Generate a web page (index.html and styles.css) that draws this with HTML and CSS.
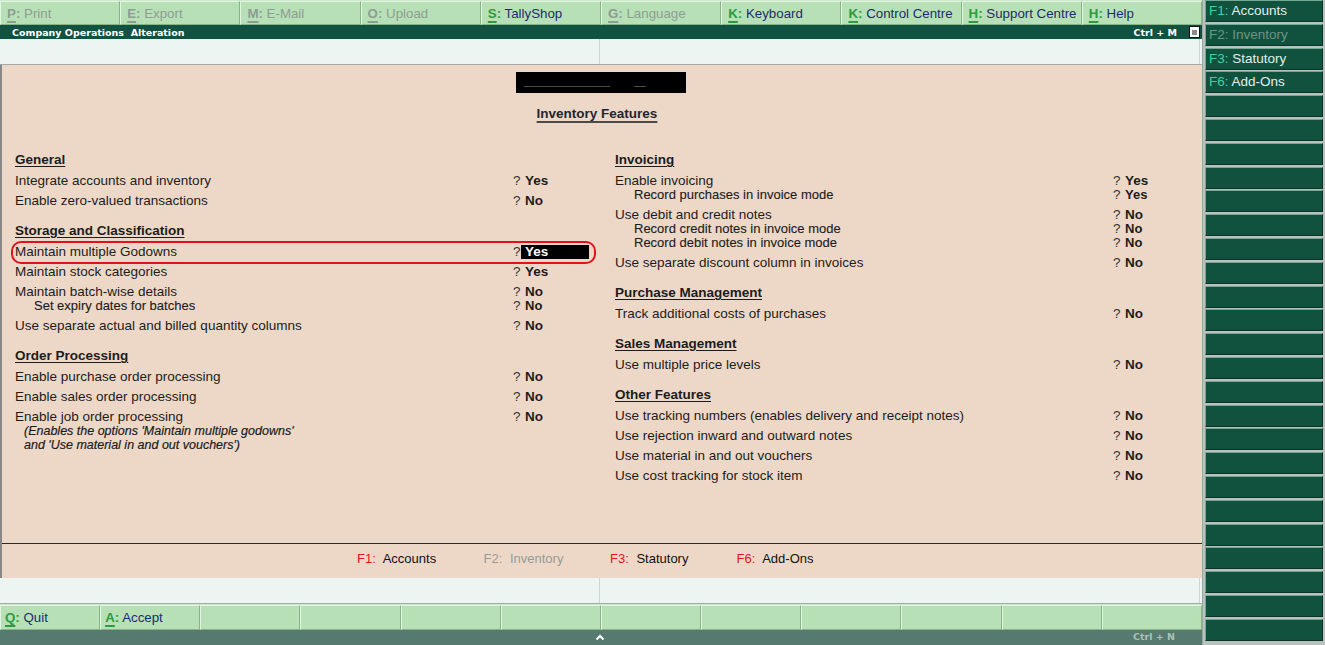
FILE: index.html
```html
<!DOCTYPE html>
<html>
<head>
<meta charset="utf-8">
<link rel="stylesheet" href="styles.css">
</head>
<body>
<div class="app">
  <div class="main">
    <div class="topbar">
      <div class="tbtn off"><span class="k"><u>P</u>:</span> Print</div>
      <div class="tbtn off"><span class="k"><u>E</u>:</span> Export</div>
      <div class="tbtn off"><span class="k"><u>M</u>:</span> E-Mail</div>
      <div class="tbtn off"><span class="k"><u>O</u>:</span> Upload</div>
      <div class="tbtn"><span class="k"><u>S</u>:</span> TallyShop</div>
      <div class="tbtn off"><span class="k"><u>G</u>:</span> Language</div>
      <div class="tbtn"><span class="k"><u>K</u>:</span> Keyboard</div>
      <div class="tbtn"><span class="k"><u>K</u>:</span> Control Centre</div>
      <div class="tbtn"><span class="k"><u>H</u>:</span> Support Centre</div>
      <div class="tbtn"><span class="k"><u>H</u>:</span> Help</div>
    </div>
    <div class="titlebar">
      <span class="ttl">Company Operations&nbsp; Alteration</span>
      <span class="ctrl">Ctrl + M</span>
      <span class="boxicon"><span></span></span>
    </div>
    <div class="infobar"><div class="half"></div><div class="half"></div></div>

    <div class="content">
      <div class="company"><span class="redact"><i class="l1"></i><i class="l2"></i></span></div>
      <div class="pagetitle">Inventory Features</div>
      <div class="cols">
        <div class="col">
          <div class="sec">General</div>
          <div class="item"><div class="row"><span class="lbl">Integrate accounts and inventory</span><span class="q">?</span><span class="v">Yes</span></div></div>
          <div class="item"><div class="row"><span class="lbl">Enable zero-valued transactions</span><span class="q">?</span><span class="v">No</span></div></div>
          <div class="sec">Storage and Classification</div>
          <div class="item hl"><div class="row"><span class="lbl">Maintain multiple Godowns</span><span class="q">?</span><span class="v sel">Yes</span></div><span class="ring"></span></div>
          <div class="item"><div class="row"><span class="lbl">Maintain stock categories</span><span class="q">?</span><span class="v">Yes</span></div></div>
          <div class="item">
            <div class="row"><span class="lbl">Maintain batch-wise details</span><span class="q">?</span><span class="v">No</span></div>
            <div class="row sub"><span class="lbl">Set expiry dates for batches</span><span class="q">?</span><span class="v">No</span></div>
          </div>
          <div class="item"><div class="row"><span class="lbl">Use separate actual and billed quantity columns</span><span class="q">?</span><span class="v">No</span></div></div>
          <div class="sec">Order Processing</div>
          <div class="item"><div class="row"><span class="lbl">Enable purchase order processing</span><span class="q">?</span><span class="v">No</span></div></div>
          <div class="item"><div class="row"><span class="lbl">Enable sales order processing</span><span class="q">?</span><span class="v">No</span></div></div>
          <div class="item">
            <div class="row"><span class="lbl">Enable job order processing</span><span class="q">?</span><span class="v">No</span></div>
            <div class="note">(Enables the options 'Maintain multiple godowns'</div>
            <div class="note">and 'Use material in and out vouchers')</div>
          </div>
        </div>
        <div class="col">
          <div class="sec">Invoicing</div>
          <div class="item">
            <div class="row"><span class="lbl">Enable invoicing</span><span class="q">?</span><span class="v">Yes</span></div>
            <div class="row sub"><span class="lbl">Record purchases in invoice mode</span><span class="q">?</span><span class="v">Yes</span></div>
          </div>
          <div class="item">
            <div class="row"><span class="lbl">Use debit and credit notes</span><span class="q">?</span><span class="v">No</span></div>
            <div class="row sub"><span class="lbl">Record credit notes in invoice mode</span><span class="q">?</span><span class="v">No</span></div>
            <div class="row sub"><span class="lbl">Record debit notes in invoice mode</span><span class="q">?</span><span class="v">No</span></div>
          </div>
          <div class="item"><div class="row"><span class="lbl">Use separate discount column in invoices</span><span class="q">?</span><span class="v">No</span></div></div>
          <div class="sec">Purchase Management</div>
          <div class="item"><div class="row"><span class="lbl">Track additional costs of purchases</span><span class="q">?</span><span class="v">No</span></div></div>
          <div class="sec">Sales Management</div>
          <div class="item"><div class="row"><span class="lbl">Use multiple price levels</span><span class="q">?</span><span class="v">No</span></div></div>
          <div class="sec">Other Features</div>
          <div class="item"><div class="row"><span class="lbl">Use tracking numbers (enables delivery and receipt notes)</span><span class="q">?</span><span class="v">No</span></div></div>
          <div class="item"><div class="row"><span class="lbl">Use rejection inward and outward notes</span><span class="q">?</span><span class="v">No</span></div></div>
          <div class="item"><div class="row"><span class="lbl">Use material in and out vouchers</span><span class="q">?</span><span class="v">No</span></div></div>
          <div class="item"><div class="row"><span class="lbl">Use cost tracking for stock item</span><span class="q">?</span><span class="v">No</span></div></div>
        </div>
      </div>
      <div class="fkeys">
        <span class="fk"><b>F1:</b> Accounts</span>
        <span class="fk dis"><b>F2:</b> Inventory</span>
        <span class="fk"><b>F3:</b> Statutory</span>
        <span class="fk"><b>F6:</b> Add-Ons</span>
      </div>
    </div>

    <div class="infobar"><div class="half"></div><div class="half"></div></div>
    <div class="botbar">
      <div class="bbtn"><span class="k"><u>Q</u>:</span> Quit</div>
      <div class="bbtn"><span class="k"><u>A</u>:</span> Accept</div>
      <div class="bbtn"></div><div class="bbtn"></div><div class="bbtn"></div><div class="bbtn"></div>
      <div class="bbtn"></div><div class="bbtn"></div><div class="bbtn"></div><div class="bbtn"></div>
      <div class="bbtn"></div><div class="bbtn"></div>
    </div>
    <div class="statusbar">
      <svg class="chev" width="10" height="7" viewBox="0 0 10 7"><polyline points="1.5,5.5 5,2 8.5,5.5" fill="none" stroke="#ffffff" stroke-width="2"/></svg>
      <span class="ctrln">Ctrl + N</span>
    </div>
  </div>

  <div class="sidebar">
    <div class="sbtn"><span class="fk2">F1:</span> Accounts</div>
    <div class="sbtn dis"><span class="fk2">F2:</span> Inventory</div>
    <div class="sbtn"><span class="fk2">F3:</span> Statutory</div>
    <div class="sbtn"><span class="fk2">F6:</span> Add-Ons</div>
    <div class="sbtn"></div><div class="sbtn"></div><div class="sbtn"></div><div class="sbtn"></div>
    <div class="sbtn"></div><div class="sbtn"></div><div class="sbtn"></div><div class="sbtn"></div>
    <div class="sbtn"></div><div class="sbtn"></div><div class="sbtn"></div><div class="sbtn"></div>
    <div class="sbtn"></div><div class="sbtn"></div><div class="sbtn"></div><div class="sbtn"></div>
    <div class="sbtn"></div><div class="sbtn"></div><div class="sbtn"></div><div class="sbtn"></div>
    <div class="sbtn"></div><div class="sbtn"></div><div class="sbtn"></div>
  </div>
</div>
</body>
</html>
```

FILE: styles.css
```css
* { box-sizing: border-box; }
html, body { margin: 0; padding: 0; }
body {
  width: 1325px;
  height: 645px;
  overflow: hidden;
  font-family: "Liberation Sans", Arial, sans-serif;
  font-size: 13.5px;
  color: #1c1c1c;
  background: #b9c2be;
}
.app { display: flex; width: 1325px; height: 645px; }
.main { width: 1202px; height: 645px; display: flex; flex-direction: column; }

/* top buttons */
.topbar {
  height: 25px;
  flex: none;
  display: grid;
  grid-template-columns: repeat(10, 1fr);
  background: #cfe9cf;
  padding-top: 1px;
}
.tbtn, .bbtn {
  background: #b7e0b7;
  border-top: 1px solid #e2f4e2;
  border-left: 1px solid #e2f4e2;
  border-right: 1px solid #86b586;
  border-bottom: 1px solid #86b586;
  padding-left: 6px;
  padding-top: 1px;
  line-height: 21px;
  white-space: nowrap;
  color: #1d2b70;
  font-size: 13.3px;
}
.k { font-weight: bold; color: #2f9b3c; }
.k u { text-decoration-color: #2f9b3c; text-underline-offset: 3px; text-decoration-thickness: 2px; }
.tbtn.off { color: #8d9d92; }
.tbtn.off .k { color: #8d9d92; }
.tbtn.off .k u { text-decoration-color: #8d9d92; }

.titlebar {
  height: 14px;
  flex: none;
  background: #115241;
  color: #ffffff;
  font-family: "DejaVu Sans", Verdana, sans-serif;
  font-weight: bold;
  font-size: 9.5px;
  display: flex;
  align-items: center;
  padding-left: 12px;
  padding-right: 2px;
}
.ttl { flex: 1; }
.ctrl { margin-right: 12px; }
.boxicon {
  width: 11px; height: 12px;
  background: #ffffff;
  border: 1px solid #111;
  display: flex; align-items: center; justify-content: center;
}
.boxicon span { width: 5px; height: 5px; background: #8a8a8a; }

.infobar {
  height: 26px;
  flex: none;
  background: #edf5f3;
  border-bottom: 1px solid #a8a8a8;
  display: flex;
}
.infobar .half { width: 600px; border-right: 1px solid #cdd5d3; }

/* content */
.content {
  flex: 1;
  background: #edd8c7;
  border-left: 2px solid #878787;
  display: flex;
  flex-direction: column;
}
.company { display: flex; justify-content: center; margin-top: 7px; padding-right: 2px; }
.redact {
  width: 170px; height: 21px; background: #000;
  position: relative; display: block;
}
.redact i { position: absolute; top: 14px; height: 1px; background: #4a4a4a; }
.redact .l1 { left: 8px; width: 86px; }
.redact .l2 { left: 118px; width: 12px; }
.pagetitle {
  text-align: center;
  margin-top: 14px;
  line-height: 14px;
  font-weight: bold;
  color: #1e2630;
  text-decoration: underline;
  text-decoration-thickness: 2px;
  text-underline-offset: 3px;
  text-decoration-color: #4a4a4a;
  padding-right: 10px;
}
.cols { display: flex; margin-top: 22px; flex: 1; }
.col { width: 600px; padding-left: 13px; }
.sec {
  margin-top: 10px;
  line-height: 14px;
  padding-bottom: 7px;
  font-weight: bold;
  text-decoration: underline;
  text-underline-offset: 2px;
}
.item { padding-bottom: 6px; position: relative; }
.row { display: flex; line-height: 14px; white-space: nowrap; }
.lbl { width: 498px; }
.q { width: 8px; color: #333; }
.v { font-weight: bold; padding-left: 4px; }
.sub .lbl { padding-left: 19px; font-size: 13px; -webkit-text-stroke: 0.12px #1c1c1c; }
.sub .v { font-size: 13px; }
.note {
  line-height: 14px;
  padding-left: 9px;
  font-style: italic;
  font-size: 12.5px;
  -webkit-text-stroke: 0.2px #1c1c1c;
}
.v.sel { background: #000; color: #fff; width: 68px; }
.hl .ring {
  position: absolute;
  left: -4px; top: -4px; right: 6px; bottom: 1px;
  border: 2px solid #e3121a;
  border-radius: 10px;
}

.fkeys {
  height: 35px;
  flex: none;
  border-top: 1px solid #2e2a28;
  padding-top: 8px;
  padding-left: 355px;
  display: flex;
  line-height: 14px;
  font-size: 13px;
}
.fk { width: 126.5px; color: #111; }
.fk b { font-weight: normal; color: #e2161c; margin-right: 4px; }
.fk.dis, .fk.dis b { color: #9a9a9a; }

.botbar {
  height: 26px;
  flex: none;
  display: grid;
  grid-template-columns: repeat(12, 1fr);
  background: #cfe9cf;
  padding-top: 1px;
}
.bbtn { padding-left: 4px; }

.statusbar {
  height: 15px;
  flex: none;
  background: #567a70;
  position: relative;
  display: flex; align-items: center; justify-content: center;
}
.chev { margin-left: -2px; }
.ctrln {
  position: absolute; right: 27px; top: 1px;
  font-family: "DejaVu Sans", Verdana, sans-serif;
  font-weight: bold; font-size: 9.5px; color: #a9c2ba;
}

/* sidebar */
.sidebar {
  width: 123px;
  background: #b9c2be;
  border-left: 1px solid #9aa6a0;
  padding-left: 2px;
  padding-right: 2px;
  display: flex;
  flex-direction: column;
  gap: 1.8px;
}
.sbtn {
  height: 22px;
  flex: none;
  background: #11523f;
  border-top: 1px solid #75a892;
  border-left: 1px solid #75a892;
  border-bottom: 1px solid #0a3328;
  border-right: 1px solid #0a3328;
  color: #e3efe9;
  line-height: 20px;
  padding-left: 3px;
  font-size: 13.5px;
  white-space: nowrap;
}
.fk2 { color: #3fd0a6; }
.sbtn.dis, .sbtn.dis .fk2 { color: #6f9486; }
```
